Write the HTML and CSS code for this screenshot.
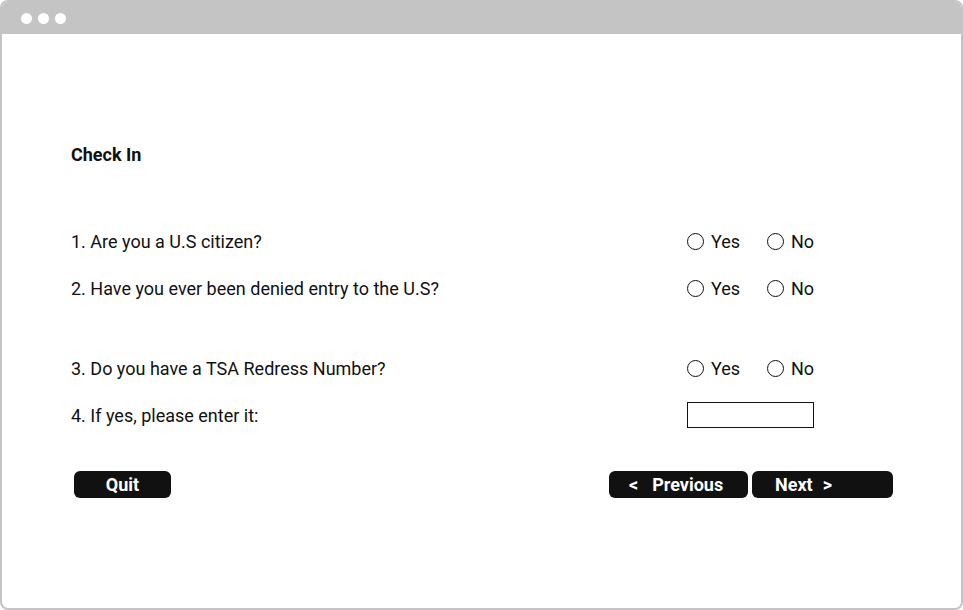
FILE: index.html
```html
<!DOCTYPE html>
<html>
<head>
<meta charset="utf-8">
<link rel="stylesheet" href="styles.css">
</head>
<body>
<div class="window">
  <div class="titlebar">
    <span class="dot"></span><span class="dot"></span><span class="dot"></span>
  </div>
  <div class="content">
    <h1 class="title">Check In</h1>
    <div class="row row-first">
      <div class="question">1. Are you a U.S citizen?</div>
      <div class="options">
        <span class="option option-yes"><span class="radio"></span>Yes</span>
        <span class="option"><span class="radio"></span>No</span>
      </div>
    </div>
    <div class="row row-near">
      <div class="question">2. Have you ever been denied entry to the U.S?</div>
      <div class="options">
        <span class="option option-yes"><span class="radio"></span>Yes</span>
        <span class="option"><span class="radio"></span>No</span>
      </div>
    </div>
    <div class="row row-far">
      <div class="question">3. Do you have a TSA Redress Number?</div>
      <div class="options">
        <span class="option option-yes"><span class="radio"></span>Yes</span>
        <span class="option"><span class="radio"></span>No</span>
      </div>
    </div>
    <div class="row row-near">
      <div class="question">4. If yes, please enter it:</div>
      <div class="options">
        <span class="textbox"></span>
      </div>
    </div>
    <div class="buttons">
      <button class="btn btn-quit">Quit</button>
      <div class="nav">
        <button class="btn btn-prev"><span class="chev">&lt;</span>Previous</button>
        <button class="btn btn-next">Next<span class="chev chev-r">&gt;</span></button>
      </div>
    </div>
  </div>
</div>
</body>
</html>
```
FILE: styles.css
```css
* { box-sizing: border-box; }
html, body { margin: 0; padding: 0; background: #fff; }
body { font-family: Roboto, "Liberation Sans", sans-serif; color: #111; }

.window {
  width: 963px;
  height: 610px;
  border: 2px solid #c4c4c4;
  border-radius: 8px;
  overflow: hidden;
  background: #fff;
}
.titlebar {
  height: 32px;
  background: #c4c4c4;
  display: flex;
  align-items: center;
  padding-left: 19px;
  gap: 6px;
}
.dot {
  width: 11px;
  height: 11px;
  border-radius: 50%;
  background: #fff;
}
.content {
  padding-left: 69px;
}
.title {
  margin: 110px 0 0 0;
  font-size: 18px;
  line-height: 22px;
  font-weight: 700;
}
.row {
  display: grid;
  grid-template-columns: 616px auto;
  height: 26px;
  align-items: center;
  font-size: 18px;
}
.row-first { margin-top: 62px; }
.row-near { margin-top: 21px; }
.row-far { margin-top: 54px; }
.options { display: flex; align-items: center; }
.option {
  display: flex;
  align-items: center;
  gap: 7px;
}
.option-yes { width: 80px; }
.radio {
  width: 17px;
  height: 17px;
  border: 1.5px solid #111;
  border-radius: 50%;
}
.textbox {
  width: 127px;
  height: 26px;
  border: 1.5px solid #111;
}
.buttons {
  margin-top: 43px;
  display: flex;
  justify-content: space-between;
  width: 822px;
  padding-left: 3px;
}
.nav { display: flex; gap: 4px; }
.btn {
  height: 27px;
  border: none;
  border-radius: 6px;
  background: #111;
  color: #fff;
  font-family: Roboto, "Liberation Sans", sans-serif;
  font-weight: 700;
  font-size: 18px;
  padding: 0;
  display: flex;
  align-items: center;
}
.btn-quit { width: 97px; justify-content: center; }
.btn-prev { width: 139px; padding-left: 20px; }
.btn-next { width: 141px; padding-left: 23px; }
.chev { margin-right: 14px; }
.chev-r { margin-right: 0; margin-left: 10px; }
```
